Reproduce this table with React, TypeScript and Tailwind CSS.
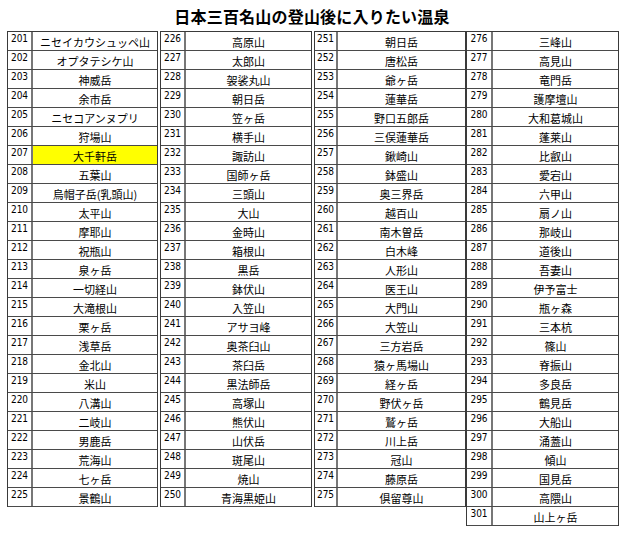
import React from "react";

type Group = { start: number; nw: number; w: number; ml: number; items: string[] };

const groups: Group[] = [
  {
    start: 201,
    nw: 25,
    w: 151,
    ml: 0,
    items: [
      "ニセイカウシュッペ山", "オプタテシケ山", "神威岳", "余市岳", "ニセコアンヌプリ", "狩場山", "大千軒岳", "五葉山",
      "烏帽子岳(乳頭山)", "太平山", "摩耶山", "祝瓶山", "泉ヶ岳", "一切経山", "大滝根山", "栗ヶ岳", "浅草岳", "金北山",
      "米山", "八溝山", "二岐山", "男鹿岳", "荒海山", "七ヶ岳", "景鶴山",
    ],
  },
  {
    start: 226,
    nw: 25,
    w: 152,
    ml: 2,
    items: [
      "高原山", "太郎山", "袈裟丸山", "朝日岳", "笠ヶ岳", "横手山", "諏訪山", "国師ヶ岳", "三頭山", "大山", "金時山",
      "箱根山", "黒岳", "鉢伏山", "入笠山", "アサヨ峰", "奥茶臼山", "茶臼岳", "黒法師岳", "高塚山", "熊伏山", "山伏岳",
      "斑尾山", "焼山", "青海黒姫山",
    ],
  },
  {
    start: 251,
    nw: 23,
    w: 152,
    ml: 2,
    items: [
      "朝日岳", "唐松岳", "爺ヶ岳", "蓮華岳", "野口五郎岳", "三俣蓮華岳", "鍬崎山", "鉢盛山", "奥三界岳", "越百山",
      "南木曽岳", "白木峰", "人形山", "医王山", "大門山", "大笠山", "三方岩岳", "猿ヶ馬場山", "経ヶ岳", "野伏ヶ岳",
      "鷲ヶ岳", "川上岳", "冠山", "藤原岳", "倶留尊山",
    ],
  },
  {
    start: 276,
    nw: 26,
    w: 153,
    ml: 0,
    items: [
      "三峰山", "高見山", "竜門岳", "護摩壇山", "大和葛城山", "蓬莱山", "比叡山", "愛宕山", "六甲山", "扇ノ山", "那岐山",
      "道後山", "吾妻山", "伊予富士", "瓶ヶ森", "三本杭", "篠山", "脊振山", "多良岳", "鶴見岳", "大船山", "涌蓋山",
      "傾山", "国見岳", "高隈山", "山上ヶ岳",
    ],
  },
];

export default function App() {
  return (
    <div className="w-[624px] h-[537px] bg-white text-black font-['Noto_Sans_CJK_JP',sans-serif] overflow-hidden">
      <div className="h-[31px] flex items-center justify-center pt-[1px]">
        <h1 className="text-[16px] font-bold leading-none tracking-[0.2px]">日本三百名山の登山後に入りたい温泉</h1>
      </div>
      <div className="flex items-start pl-[7px]">
        {groups.map((g) => (
          <div
            key={g.start}
            className="border-t border-l border-r border-[#3a3a3a]"
            style={{ width: g.w, marginLeft: g.ml }}
          >
            {g.items.map((name, i) => {
              const n = g.start + i;
              const yellow = n === 207;
              return (
                <div key={n} className="flex h-[19px] border-b border-[#4a4a4a]">
                  <div
                    className="shrink-0 border-r-2 border-[#777] text-center text-[10px] leading-[11px] pt-[1px] font-['Liberation_Sans_Narrow','DejaVu_Sans_Condensed','Liberation_Sans',sans-serif]"
                    style={{ width: g.nw }}
                  >
                    {n}
                  </div>
                  <div
                    className={`flex-1 flex items-center justify-center text-[11px] leading-none pt-[2px] whitespace-nowrap ${
                      yellow ? "bg-[#ffff00]" : ""
                    }`}
                  >
                    {name}
                  </div>
                </div>
              );
            })}
          </div>
        ))}
      </div>
    </div>
  );
}
